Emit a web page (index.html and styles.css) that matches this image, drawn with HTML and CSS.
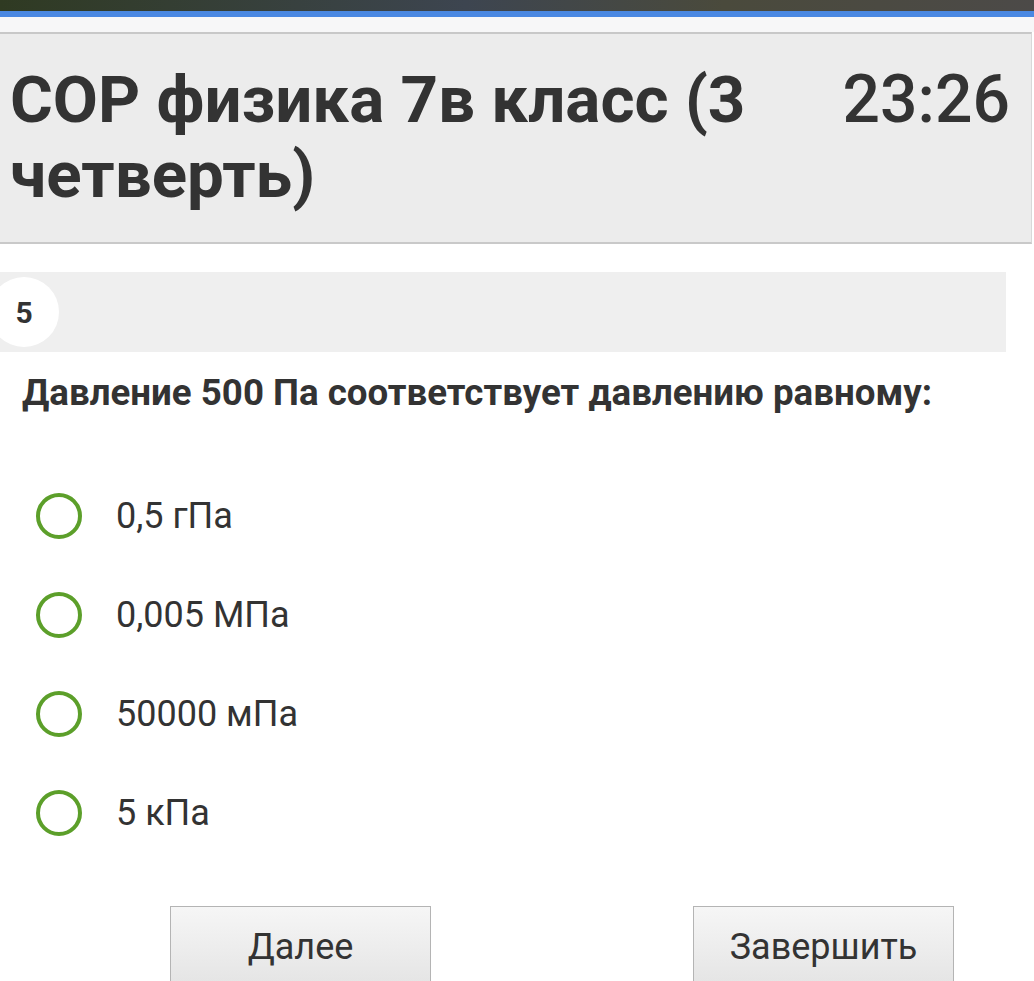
FILE: index.html
```html
<!DOCTYPE html>
<html lang="ru">
<head>
    <meta charset="UTF-8">
    <meta name="viewport" content="width=device-width, initial-scale=1.0">
    <title>СОР физика 7в класс</title>
    <link rel="stylesheet" href="styles.css">
</head>
<body>

    <div class="status-strip"></div>
    <div class="app-bar"></div>

    <div class="test-header">
        <h1 class="test-title">СОР физика 7в класс (3 четверть)</h1>
        <div class="timer">23:26</div>
    </div>

    <div class="question-bar">
        <span class="question-num">5</span>
    </div>

    <p class="question-text">Давление 500 Па соответствует давлению равному:</p>

    <ul class="answers">
        <li><span class="radio"></span>0,5 гПа</li>
        <li><span class="radio"></span>0,005 МПа</li>
        <li><span class="radio"></span>50000 мПа</li>
        <li><span class="radio"></span>5 кПа</li>
    </ul>

    <div class="actions">
        <button>Далее</button>
        <button>Завершить</button>
    </div>

</body>
</html>
```

FILE: styles.css
```css
body {
    margin: 0;
    background-color: #ffffff;
    color: #333333;
    font-family: Roboto, 'Noto Sans', Arial, sans-serif;
    overflow: hidden;
}

.status-strip {
    height: 11px;
    background: linear-gradient(90deg, #2f3a22 0%, #3d4550 45%, #4a4a3c 70%, #4c4a48 100%);
}

.app-bar {
    height: 6px;
    background-color: #4a88e2;
    border-bottom: 15px solid #f7f7f8;
}

.test-header {
    display: flex;
    justify-content: space-between;
    align-items: flex-start;
    width: 1032px;
    box-sizing: border-box;
    padding: 28px 21px 30px 10px;
    background-color: #ececec;
    border-top: 2px solid #c8c8c8;
    border-bottom: 2px solid #c9c9c9;
    border-right: 1px solid #d8d8d8;
}

.test-title {
    margin: 0;
    font-size: 65.5px;
    line-height: 75px;
    font-weight: 700;
    max-width: 760px;
}

.timer {
    font-size: 66px;
    line-height: 75px;
    font-weight: 500;
}

.question-bar {
    display: flex;
    align-items: center;
    width: 1006px;
    height: 80px;
    margin-top: 28px;
    background-color: #efefef;
}

.question-num {
    display: flex;
    align-items: center;
    justify-content: center;
    width: 70px;
    height: 70px;
    margin-left: -11px;
    border-radius: 50%;
    background-color: #ffffff;
    font-size: 30px;
    font-weight: 700;
}

.question-text {
    margin: 19px 0 0 22px;
    font-size: 36.7px;
    font-weight: 700;
    line-height: 44px;
}

.answers {
    list-style: none;
    margin: 78px 0 0 0;
    padding: 0 0 0 36px;
}

.answers li {
    display: flex;
    align-items: center;
    height: 46px;
    margin-bottom: 53px;
    font-size: 36px;
}

.radio {
    width: 38px;
    height: 38px;
    margin-right: 34px;
    border: 4px solid #5c9f2a;
    border-radius: 50%;
}

.actions {
    display: flex;
    justify-content: space-between;
    padding: 0 80px 0 170px;
    margin-top: 70px;
}

button {
    width: 261px;
    height: 90px;
    padding: 0 0 8px;
    border: 1px solid #b4b4b4;
    border-radius: 0;
    background: linear-gradient(#f6f6f6, #e2e2e2);
    color: #333333;
    font-family: Roboto, Arial, sans-serif;
    font-size: 36px;
}
```
